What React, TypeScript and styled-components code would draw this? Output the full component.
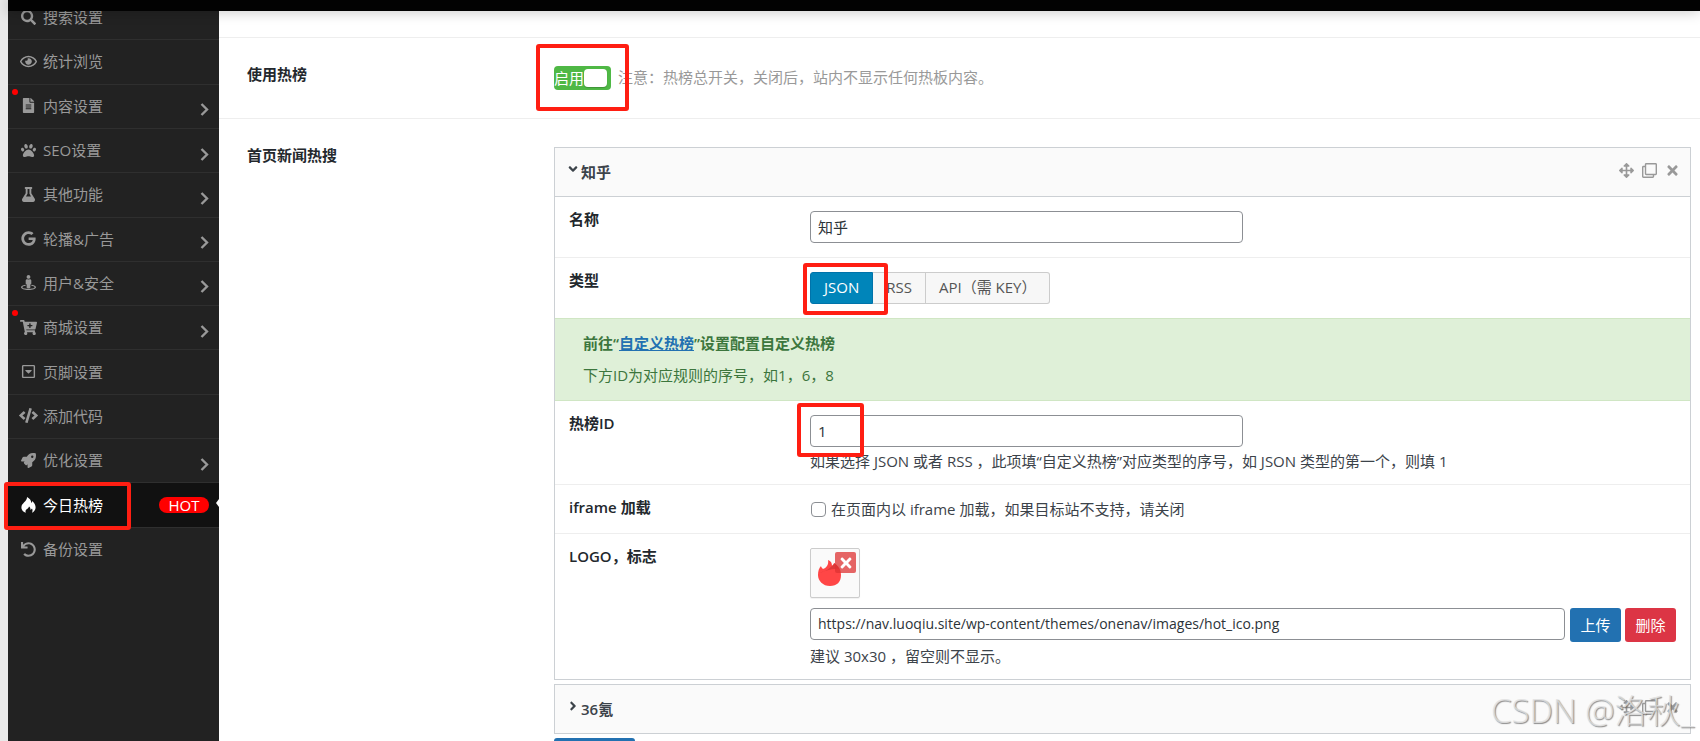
import React from "react";
import styled, { createGlobalStyle, css } from "styled-components";
import {
  FaSearch, FaRegEye, FaFileAlt, FaPaw, FaFlask, FaGoogle, FaStreetView, FaCartPlus,
  FaRegCaretSquareDown, FaCode, FaRocket, FaUndo, FaAngleRight, FaAngleDown,
  FaArrowsAlt, FaRegClone, FaTimes,
} from "react-icons/fa";

const Global = createGlobalStyle`
  * { box-sizing: border-box; }
  body {
    margin: 0;
    height: 100vh;
    overflow: hidden;
    background: #e9e9e9;
    color: #3c434a;
    font: 15px/20px "Open Sans", "Noto Sans CJK SC", sans-serif;
  }
  button, input { font: inherit; color: inherit; margin: 0; }
`;

const Page = styled.div`
  position: relative;
  height: 100vh;
  margin-left: 8px;
  display: flex;
  flex-direction: column;
`;

const TopBar = styled.header`
  position: relative;
  z-index: 2;
  flex: none;
  height: 11px;
  background: #020202;
  box-shadow: 0 0 14px rgba(0, 0, 0, 0.25);
`;

const Body = styled.div`
  flex: 1;
  min-height: 0;
  display: flex;
`;

const Sidebar = styled.nav`
  flex: none;
  width: 211px;
  background: #222;
`;

const Menu = styled.ul`
  list-style: none;
  margin: -15px 0 0;
  padding: 0;
  height: 576px;
  display: grid;
  grid-auto-rows: 1fr;
`;

const MenuItem = styled.li<{ $active?: boolean }>`
  position: relative;
  border-bottom: 1px solid #2f2f2f;
  ${(p) => p.$active && css`background: #111;`}
  &:last-child { border-bottom: 0; }
`;

const MenuLink = styled.a<{ $active?: boolean }>`
  display: flex;
  align-items: center;
  height: 100%;
  padding: 0 10px 1px;
  color: ${(p) => (p.$active ? "#fff" : "#999")};
  text-decoration: none;
`;

const MenuIcon = styled.span`
  display: flex;
  justify-content: center;
  width: 20px;
  margin-right: 5px;
  svg { flex: none; }
`;

const MenuArrow = styled.svg`
  width: 9px;
  height: 13px;
  margin: 8px 0 0 auto;
  fill: none;
  stroke: currentColor;
  stroke-width: 2.4;
`;

const HotBadge = styled.span`
  margin-left: auto;
  width: 50px;
  border-radius: 8px;
  background: #f00;
  color: #fff;
  line-height: 16px;
  text-align: center;
`;

const Dot = styled.span`
  position: absolute;
  top: 4px;
  left: 4px;
  width: 6px;
  height: 6px;
  border-radius: 50%;
  background: #f00;
`;

const Pointer = styled.span`
  position: absolute;
  right: 0;
  top: 16px;
  border: 4px solid transparent;
  border-left: 0;
  border-right: 3px solid #fff;
`;

const Mark = styled.span`
  position: absolute;
  z-index: 1;
  border: 4px solid #ff1e12;
  border-radius: 3px;
  pointer-events: none;
`;

const MenuMark = styled(Mark)`
  inset: -1px 88px -3px -4px;
`;

const SwitchMark = styled(Mark)`
  inset: -22px -18px -21px;
`;

const TypeMark = styled(Mark)`
  top: -9px;
  left: -7px;
  width: 85px;
  height: 52px;
`;

const IdMark = styled(Mark)`
  top: -12px;
  left: -13px;
  width: 67px;
  height: 54px;
`;

const Content = styled.main`
  flex: 1;
  min-width: 0;
  background: #fff;
`;

const Divider = styled.div`
  height: 27px;
  border-bottom: 1px solid #eee;
`;

const Field = styled.section`
  display: flex;
  padding: 28px 9px 28px 28px;
  border-bottom: 1px solid #eee;
`;

const FieldTitle = styled.h4`
  flex: none;
  width: 307px;
  margin: 0;
  font-size: 15px;
  font-weight: 600;
  line-height: 16px;
  color: #23282d;
`;

const FieldBody = styled.div`
  flex: 1;
  min-width: 0;
`;

const SwitchLine = styled.div`
  display: flex;
  gap: 7px;
  line-height: 22px;
  color: #999;
`;

const SwitchHolder = styled.span`
  position: relative;
  display: flex;
`;

const Switch = styled.button`
  display: flex;
  align-items: center;
  width: 57px;
  height: 24px;
  padding: 0 4px 0 0;
  border: 0;
  border-radius: 4px;
  background: #4fb845;
  color: #fff;
  white-space: nowrap;
`;

const Knob = styled.span`
  flex: none;
  width: 23px;
  height: 18px;
  border-radius: 4px;
  background: #fff;
  box-shadow: 0 1px 1px rgba(0, 0, 0, 0.2);
`;

const Panel = styled.section`
  border: 1px solid #ccd0d4;
  margin-bottom: 4px;
`;

const PanelHead = styled.header<{ $open?: boolean }>`
  display: flex;
  align-items: center;
  height: ${(p) => (p.$open ? "49px" : "48px")};
  padding: 0 10px 0 11px;
  background: #fafafa;
  border-bottom: ${(p) => (p.$open ? "1px solid #ccd0d4" : "0")};
`;

const PanelTitle = styled.button`
  display: flex;
  align-items: center;
  gap: 1px;
  padding: 0;
  border: 0;
  background: none;
  font-weight: 600;
  svg { width: 14px; height: 14px; margin-bottom: 6px; }
`;

const Tools = styled.div`
  display: flex;
  align-items: center;
  gap: 8px;
  margin-left: auto;
  padding-bottom: 3px;
`;

const Tool = styled.button`
  display: flex;
  padding: 0;
  border: 0;
  background: none;
  color: #999;
  font-size: 15px;
`;

const Row = styled.div`
  display: flex;
  padding: 14px;
  border-bottom: 1px solid #eee;
  &:last-child { border-bottom: 0; }
`;

const RowTitle = styled.label`
  flex: none;
  width: 241px;
  line-height: 16px;
  font-weight: 600;
  color: #23282d;
`;

const Control = styled.div`
  position: relative;
  flex: 1;
  min-width: 0;
`;

const TextInput = styled.input<{ $url?: boolean }>`
  display: block;
  ${(p) => (p.$url ? css`flex: 1; min-width: 0; font-size: 14px;` : css`width: 433px; max-width: 100%;`)}
  height: 32px;
  padding: 0 7px 1px;
  border: 1px solid #8c8f94;
  border-radius: 4px;
  background: #fff;
  color: #2c3338;
`;

const Help = styled.p`
  margin: 4px 0 -1px;
`;

const Segments = styled.div`
  display: flex;
`;

const Segment = styled.button<{ $active?: boolean }>`
  height: 32px;
  padding: 0 13px 2px;
  border: 1px solid #ccc;
  border-left-width: 0;
  background: #f7f7f7;
  color: #555;
  white-space: nowrap;
  &:first-child { border-left-width: 1px; border-radius: 3px 0 0 3px; }
  &:last-child { border-radius: 0 3px 3px 0; }
  ${(p) => p.$active && css`background: #0085ba; border-color: #0073aa; color: #fff;`}
`;

const Notice = styled.div`
  margin-top: -1px;
  padding: 14px 28px 15px;
  border: solid #d0e6c4;
  border-width: 1px 0;
  background: #dff0d8;
  color: #3c763d;
  p { margin: 0 0 12px; }
  p:last-child { margin: 0; }
  b { font-weight: 600; }
  a { color: #2271b1; }
`;

const CheckLabel = styled.label`
  display: flex;
  align-items: center;
  gap: 5px;
`;

const Checkbox = styled.input`
  appearance: none;
  width: 15px;
  height: 15px;
  margin-left: 1px;
  border: 1px solid #8c8f94;
  border-radius: 4px;
  background: #fff;
`;

const Preview = styled.div`
  position: relative;
  width: 50px;
  height: 50px;
  padding: 10px 7px;
  margin-bottom: 10px;
  border: 1px solid #ccc;
  border-radius: 2px;
  background: #fafafa;
  box-shadow: 0 1px 1px rgba(0, 0, 0, 0.06);
`;

const RemoveButton = styled.button`
  position: absolute;
  top: 3px;
  right: 3px;
  display: flex;
  align-items: center;
  justify-content: center;
  width: 21px;
  height: 21px;
  padding: 0;
  border: 0;
  border-radius: 2px;
  background: rgba(221, 51, 51, 0.75);
  color: #fff;
  font-size: 16px;
`;

const UploadLine = styled.div`
  display: flex;
  align-items: flex-start;
`;

const ActionButton = styled.button<{ $danger?: boolean }>`
  height: 34px;
  width: 51px;
  margin-left: ${(p) => (p.$danger ? "4px" : "5px")};
  padding: 0;
  border: 0;
  border-radius: 3px;
  background: ${(p) => (p.$danger ? "#dc3545" : "#2271b1")};
  color: #fff;
`;

const AddButton = styled.button`
  height: 34px;
  width: 81px;
  padding: 0;
  border: 0;
  border-radius: 3px;
  background: #2271b1;
`;

const Watermark = styled.div`
  position: absolute;
  right: 6px;
  bottom: 8px;
  z-index: 3;
  font-size: 33px;
  font-weight: 300;
  line-height: 44px;
  color: rgba(225, 225, 225, 0.8);
  text-shadow: 1px 1px 1px rgba(90, 90, 90, 0.7);
  white-space: nowrap;
  pointer-events: none;
`;

const FireIcon = () => (
  <svg width="15" height="16" viewBox="0 0 15 16" aria-hidden="true">
    <path
      d="M6 0c3 1.600 4.500 3.800 4.200 6 .7-.5 1-1.200 1.100-2.100 2 1.800 3.300 4.100 3.300 6.400 0 2.500-1.400 4.500-3.600 5.400.7-1.500.7-2.900 0-4.100-.4.700-.9 1.100-1.500 1.300.1-1.600-.4-2.700-1.500-3.500-.1 2-3.500 2.700-3.500 4.800 0 .6.100 1.100.4 1.500C2 14.900.4 12.900.4 10.400c0-4.300 5.900-5.800 5.600-10.400z"
      fill="currentColor"
    />
  </svg>
);

type Entry = { label: string; icon: React.ReactNode; arrow?: boolean; dot?: boolean; active?: boolean };

const entries: Entry[] = [
  { label: "搜索设置", icon: <FaSearch /> },
  { label: "统计浏览", icon: <FaRegEye size={17} /> },
  { label: "内容设置", icon: <FaFileAlt />, arrow: true, dot: true },
  { label: "SEO设置", icon: <FaPaw />, arrow: true },
  { label: "其他功能", icon: <FaFlask />, arrow: true },
  { label: "轮播&广告", icon: <FaGoogle />, arrow: true },
  { label: "用户&安全", icon: <FaStreetView />, arrow: true },
  { label: "商城设置", icon: <FaCartPlus size={17} />, arrow: true, dot: true },
  { label: "页脚设置", icon: <FaRegCaretSquareDown /> },
  { label: "添加代码", icon: <FaCode size={19} /> },
  { label: "优化设置", icon: <FaRocket />, arrow: true },
  { label: "今日热榜", icon: <FireIcon />, active: true },
  { label: "备份设置", icon: <FaUndo /> },
];

const PanelTools = () => (
  <Tools>
    <Tool type="button" aria-label="移动"><FaArrowsAlt /></Tool>
    <Tool type="button" aria-label="复制"><FaRegClone /></Tool>
    <Tool type="button" aria-label="移除"><FaTimes /></Tool>
  </Tools>
);

const Flame = () => (
  <svg width="24" height="28" viewBox="0 0 24 28" aria-hidden="true">
    <path
      d="M10 1c3 1 4 3 4 6 1-1 2-2 2-3 5 3 7 7 7 12 0 7-4 11-11 11S0 22 0 16c0-4 1-7 3-9 0 1 1 2 2 3 3-1 6-4 5-9z"
      fill="#ff4646"
    />
    <path d="M1 14c5-1 9-3 14-8 1-1 1-1 1-2 3 2 4 4 5 6-7-1-13 2-20 4z" fill="#dd3a3a" />
  </svg>
);

export default function App() {
  return (
    <>
      <Global />
      <Page>
        <TopBar />
        <Body>
          <Sidebar>
            <Menu>
              {entries.map((e) => (
                <MenuItem key={e.label} $active={e.active}>
                  {e.dot && <Dot />}
                  <MenuLink href="#" $active={e.active}>
                    <MenuIcon>{e.icon}</MenuIcon>
                    {e.label}
                    {e.arrow && (
                      <MenuArrow viewBox="0 0 9 13" aria-hidden="true">
                        <path d="M1.500 1l5.500 5.500-5.500 5.500" />
                      </MenuArrow>
                    )}
                    {e.active && <HotBadge>HOT</HotBadge>}
                  </MenuLink>
                  {e.active && <Pointer />}
                  {e.active && <MenuMark />}
                </MenuItem>
              ))}
            </Menu>
          </Sidebar>
          <Content>
            <Divider />
            <Field>
              <FieldTitle>使用热榜</FieldTitle>
              <FieldBody>
                <SwitchLine>
                  <SwitchHolder>
                    <Switch type="button" role="switch" aria-checked="true">启用<Knob /></Switch>
                    <SwitchMark />
                  </SwitchHolder>
                  注意：热榜总开关，关闭后，站内不显示任何热板内容。
                </SwitchLine>
              </FieldBody>
            </Field>
            <Field>
              <FieldTitle>首页新闻热搜</FieldTitle>
              <FieldBody>
                <Panel>
                  <PanelHead $open>
                    <PanelTitle type="button"><FaAngleDown />知乎</PanelTitle>
                    <PanelTools />
                  </PanelHead>
                  <Row>
                    <RowTitle htmlFor="name">名称</RowTitle>
                    <Control><TextInput id="name" type="text" defaultValue="知乎" /></Control>
                  </Row>
                  <Row>
                    <RowTitle as="span">类型</RowTitle>
                    <Control>
                      <Segments>
                        <Segment type="button" $active>JSON</Segment>
                        <Segment type="button">RSS</Segment>
                        <Segment type="button">API（需 KEY）</Segment>
                      </Segments>
                      <TypeMark />
                    </Control>
                  </Row>
                  <Notice>
                    <p><b>前往“<a href="#">自定义热榜</a>”设置配置自定义热榜</b></p>
                    <p>下方ID为对应规则的序号，如1，6，8</p>
                  </Notice>
                  <Row>
                    <RowTitle htmlFor="hot-id">热榜ID</RowTitle>
                    <Control>
                      <TextInput id="hot-id" type="text" defaultValue="1" />
                      <IdMark />
                      <Help>如果选择 JSON 或者 RSS ，此项填“自定义热榜”对应类型的序号，如 JSON 类型的第一个，则填 1</Help>
                    </Control>
                  </Row>
                  <Row>
                    <RowTitle htmlFor="iframe">iframe 加载</RowTitle>
                    <Control>
                      <CheckLabel>
                        <Checkbox id="iframe" type="checkbox" />
                        在页面内以 iframe 加载，如果目标站不支持，请关闭
                      </CheckLabel>
                    </Control>
                  </Row>
                  <Row>
                    <RowTitle htmlFor="logo">LOGO，标志</RowTitle>
                    <Control>
                      <Preview>
                        <Flame />
                        <RemoveButton type="button" aria-label="移除图片"><FaTimes /></RemoveButton>
                      </Preview>
                      <UploadLine>
                        <TextInput
                          id="logo"
                          type="text"
                          $url
                          defaultValue="https://nav.luoqiu.site/wp-content/themes/onenav/images/hot_ico.png"
                        />
                        <ActionButton type="button">上传</ActionButton>
                        <ActionButton type="button" $danger>删除</ActionButton>
                      </UploadLine>
                      <Help>建议 30x30 ，留空则不显示。</Help>
                    </Control>
                  </Row>
                </Panel>
                <Panel>
                  <PanelHead>
                    <PanelTitle type="button"><FaAngleRight />36氪</PanelTitle>
                    <PanelTools />
                  </PanelHead>
                </Panel>
                <AddButton type="button" aria-label="添加" />
              </FieldBody>
            </Field>
          </Content>
        </Body>
        <Watermark>CSDN @洛秋_</Watermark>
      </Page>
    </>
  );
}
